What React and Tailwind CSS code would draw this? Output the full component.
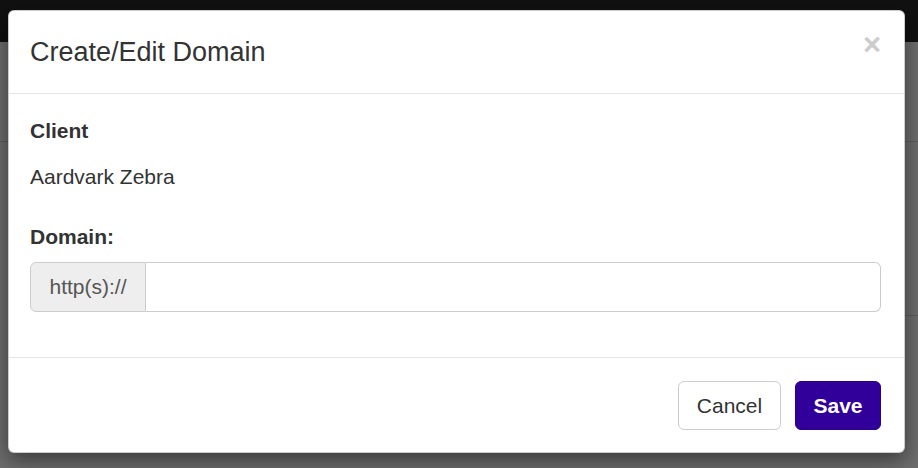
export default function App() {
  const font = { fontFamily: '"Liberation Sans", Arial, sans-serif' };
  return (
    <div className="relative w-[918px] h-[468px] overflow-hidden bg-[#6e6e6e]" style={font}>
      <div className="h-[42px] bg-[#111111]" />
      <div className="h-[99px]" />
      <div className="h-px bg-[#5e5e5e]" />
      <div className="flex justify-end">
        <div className="mt-[173px] h-px w-[14px] bg-[#5e5e5e]" />
      </div>

      <div className="absolute left-[8px] top-[10px] w-[897px] h-[443px] bg-white rounded-[6px] border border-black/20 shadow-[0_7px_22px_rgba(0,0,0,0.5)] flex flex-col text-[#333333]">
        <div className="h-[83px] border-b border-[#e5e5e5] flex items-center justify-between pl-[21px] pr-[23px]">
          <h4 className="text-[27px] leading-[38px] font-normal text-[#333333]">Create/Edit Domain</h4>
          <span className="text-[31px] font-bold leading-none text-[#cccccc] -mt-[16px]">×</span>
        </div>
        <div className="flex-1 pt-[22px] px-[21px] flex flex-col">
          <div className="text-[21px] leading-[30px] font-bold">Client</div>
          <div className="mt-[16px] text-[21px] leading-[30px]">Aardvark Zebra</div>
          <div className="mt-[30px] text-[21px] leading-[30px] font-bold">Domain:</div>
          <div className="mt-[10px] flex h-[50px] w-[851px]">
            <div className="w-[116px] flex items-center justify-center bg-[#eeeeee] border border-[#cccccc] rounded-l-[6px] text-[21px] text-[#555555]">
              http(s)://
            </div>
            <div className="flex-1 border border-l-0 border-[#cccccc] rounded-r-[6px] bg-white" />
          </div>
        </div>
        <div className="h-[95px] border-t border-[#e5e5e5] flex items-start justify-end gap-[14px] pt-[23px] pr-[23px]">
          <button className="w-[103px] h-[49px] rounded-[6px] border border-[#cccccc] bg-white text-[21px] text-[#333333]">
            Cancel
          </button>
          <button className="w-[86px] h-[49px] rounded-[6px] border border-[#2a0085] bg-[#31009a] text-[21px] font-bold text-white">
            Save
          </button>
        </div>
      </div>
    </div>
  );
}
